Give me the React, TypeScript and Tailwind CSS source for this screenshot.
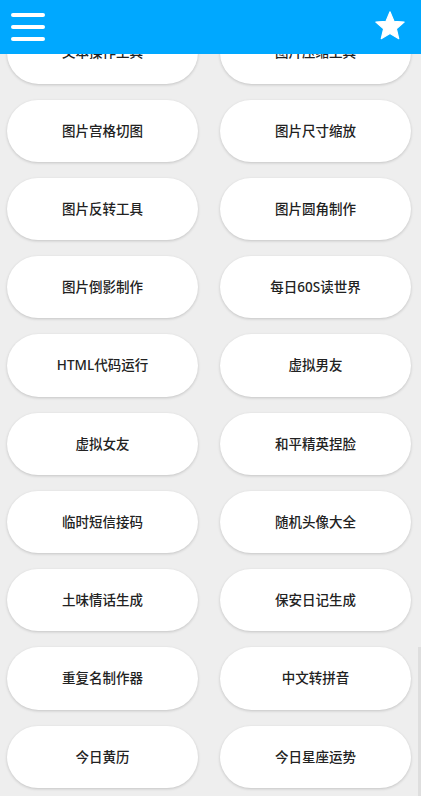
import React from 'react'

const TOOLS: string[] = [
  '文本操作工具', '图片压缩工具',
  '图片宫格切图', '图片尺寸缩放',
  '图片反转工具', '图片圆角制作',
  '图片倒影制作', '每日60S读世界',
  'HTML代码运行', '虚拟男友',
  '虚拟女友', '和平精英捏脸',
  '临时短信接码', '随机头像大全',
  '土味情话生成', '保安日记生成',
  '重复名制作器', '中文转拼音',
  '今日黄历', '今日星座运势',
]

const FONT = { fontFamily: '"Noto Sans", "Noto Sans CJK SC", sans-serif' }

export default function App() {
  return (
    <div className="relative min-h-[796px] w-full bg-[#eeeeee] overflow-hidden" style={FONT}>
      {/* Fixed top bar — content scrolls beneath it */}
      <header className="fixed top-0 inset-x-0 z-10 h-[54px] bg-[#00a8ff] flex items-center justify-between pl-[11px] pr-[14px]">
        <button aria-label="menu" className="flex flex-col gap-[8px]">
          <span className="block w-[34px] h-[4px] rounded-full bg-white" />
          <span className="block w-[34px] h-[4px] rounded-full bg-white" />
          <span className="block w-[34px] h-[4px] rounded-full bg-white" />
        </button>
        <button aria-label="favorites" className="flex items-center justify-center -mt-[3px]">
          <StarIcon />
        </button>
      </header>

      {/* Tool list */}
      <main className="grid grid-cols-2 gap-x-[22px] gap-y-[16px] pl-[7px] pr-[10px] pt-[21.25px] pb-[16px]">
        {TOOLS.map(name => (
          <button
            key={name}
            className="h-[62.25px] rounded-full bg-white flex items-center justify-center
              text-[13.5px] font-medium text-[#222222] shadow-[0_1px_3px_rgba(0,0,0,0.18)]"
          >
            {name}
          </button>
        ))}
      </main>

      {/* Scrollbar thumb */}
      <div className="fixed right-0 top-[647px] bottom-0 w-[3px] bg-[#dedede]" />
    </div>
  )
}

function StarIcon() {
  return (
    <svg width="34" height="34" viewBox="0 0 24 24" fill="white" aria-hidden="true">
      <path d="M12 17.27L18.18 21l-1.64-7.03L22 9.24l-7.19-.61L12 2 9.19 8.63 2 9.24l5.46 4.73L5.82 21z" strokeLinejoin="round" stroke="white" strokeWidth="0.8" />
    </svg>
  )
}
